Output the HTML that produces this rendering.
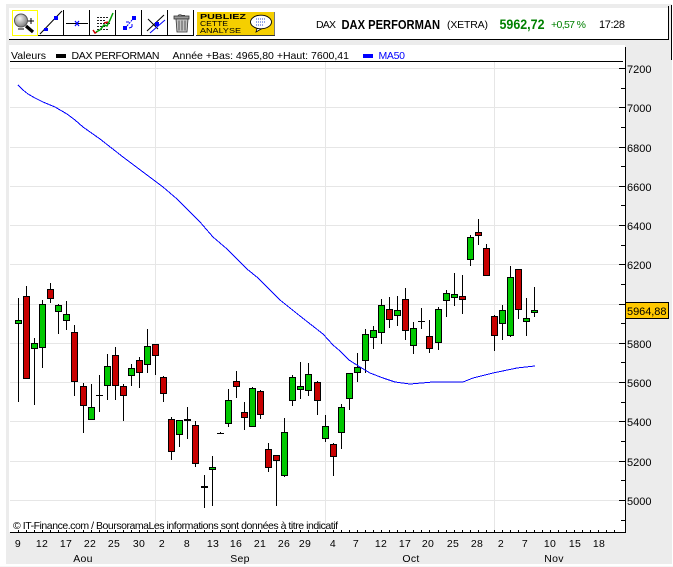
<!DOCTYPE html>
<html><head><meta charset="utf-8"><title>DAX PERFORMAN</title>
<style>
html,body{margin:0;padding:0;background:#fff;width:673px;height:567px;overflow:hidden}
svg{display:block}
text{font-family:"Liberation Sans",sans-serif;fill:#000}
.ax text{font-size:11px}
.bt text{font-size:10.5px;text-anchor:middle;letter-spacing:.3px}
.c{shape-rendering:crispEdges}
</style></head><body>
<svg width="673" height="567" viewBox="0 0 673 567" xmlns="http://www.w3.org/2000/svg">
<defs><radialGradient id="g" cx=".4" cy=".35" r=".7"><stop offset="0" stop-color="#f4f4f4"/><stop offset="1" stop-color="#777"/></radialGradient></defs>
<g class="c">
<rect x="6" y="4" width="666" height="560" fill="#ececec"/>
<rect x="0" y="566" width="673" height="1" fill="#f5f5f5"/>
<rect x="9" y="8" width="659" height="31" fill="#fff"/>
<rect x="9" y="39" width="660" height="1" fill="#000"/>
<rect x="668" y="6" width="1" height="34" fill="#000"/>
<rect x="671" y="5" width="1" height="55" fill="#000"/>
<rect x="9" y="45" width="616" height="487" fill="#fff"/>
<path d="M10 68.5H621M10 107.5H621M10 147.5H621M10 186.5H621M10 225.5H621M10 264.5H621M10 304.5H621M10 343.5H621M10 382.5H621M10 421.5H621M10 461.5H621M10 500.5H621M155.5 62V532M325.5 62V532M494.5 62V532" stroke="#e6e6e6" fill="none"/>
<rect x="10" y="61" width="613" height="1" fill="#000"/>
<rect x="625" y="47" width="1" height="486" fill="#000"/>
<rect x="10" y="532" width="616" height="1" fill="#000"/>
<path d="M619 68.5h6M621 88.5h4M619 107.5h6M621 127.5h4M619 147.5h6M621 166.5h4M619 186.5h6M621 205.5h4M619 225.5h6M621 245.5h4M619 264.5h6M621 284.5h4M619 304.5h6M621 323.5h4M619 343.5h6M621 362.5h4M619 382.5h6M621 402.5h4M619 421.5h6M621 441.5h4M619 461.5h6M621 480.5h4M619 500.5h6M621 520.5h4" stroke="#000" fill="none"/>
<path d="M18.5 530v2M26.5 530v2M34.5 530v2M42.5 530v2M50.5 530v2M58.5 530v2M66.5 530v2M74.5 530v2M83.5 530v2M91.5 530v2M99.5 530v2M107.5 530v2M115.5 530v2M123.5 530v2M131.5 530v2M139.5 530v2M147.5 530v2M155.5 530v2M163.5 530v2M171.5 530v2M179.5 530v2M187.5 530v2M195.5 530v2M204.5 530v2M212.5 530v2M220.5 530v2M228.5 530v2M236.5 530v2M244.5 530v2M252.5 530v2M260.5 530v2M268.5 530v2M276.5 530v2M284.5 530v2M292.5 530v2M300.5 530v2M308.5 530v2M317.5 530v2M325.5 530v2M333.5 530v2M341.5 530v2M349.5 530v2M357.5 530v2M365.5 530v2M373.5 530v2M381.5 530v2M389.5 530v2M397.5 530v2M405.5 530v2M413.5 530v2M421.5 530v2M429.5 530v2M438.5 530v2M446.5 530v2M454.5 530v2M462.5 530v2M470.5 530v2M478.5 530v2M486.5 530v2M494.5 530v2M502.5 530v2M510.5 530v2M518.5 530v2M526.5 530v2M534.5 530v2M542.5 530v2M550.5 530v2M558.5 530v2M566.5 530v2M574.5 530v2M582.5 530v2M590.5 530v2M598.5 530v2M606.5 530v2M614.5 530v2" stroke="#000" fill="none"/>
<!-- wicks -->
<path stroke="#000" fill="none" d="M18.5 298V402M26.5 286V379M34.5 338V405M42.5 300V368M50.5 283V303M58.5 304V334M66.5 301V330M74.5 325V396M83.5 383V433M91.5 384V420M99.5 375V412M107.5 354V400M115.5 347V400M123.5 384V421M131.5 364V386M139.5 357V388M147.5 329V373M155.5 344V375M163.5 376V402M171.5 417V460M179.5 420V447M187.5 407V439M195.5 421V467M204.5 475V508M212.5 456V506M220.5 432V434M228.5 389V427M236.5 371V398M244.5 402V430M252.5 387V427M260.5 390V419M268.5 443V472M276.5 455V506M284.5 418V477M292.5 375V406M300.5 362V399M308.5 363V396M317.5 381V415M325.5 415V442M333.5 443V476M341.5 404V449M349.5 373V410M357.5 353V382M365.5 329V373M373.5 326V349M381.5 299V344M389.5 297V328M397.5 296V326M405.5 288V340M413.5 322V354M421.5 308V329M429.5 320V353M438.5 307V350M446.5 290V317M454.5 273V306M462.5 275V314M470.5 235V266M478.5 219V245M486.5 244V276M494.5 315V351M502.5 305V340M510.5 266V337M518.5 269V319M526.5 298V336M534.5 287V317"/>
<!-- dojis -->
<path fill="#000" d="M96 395h7v1h-7zM184 419h7v2h-7zM201 486h7v2h-7zM217 433h7v1h-7zM418 321h7v1h-7z"/>
<!-- green bodies -->
<path fill="#00c800" stroke="#000" d="M15.5 320.5h6v3h-6zM31.5 343.5h6v5h-6zM39.5 304.5h6v43h-6zM55.5 305.5h6v6h-6zM63.5 314.5h6v6h-6zM88.5 407.5h6v12h-6zM104.5 366.5h6v19h-6zM128.5 368.5h6v7h-6zM144.5 346.5h6v18h-6zM176.5 420.5h6v14h-6zM209.5 467.5h6v2h-6zM225.5 400.5h6v23h-6zM249.5 388.5h6v38h-6zM281.5 432.5h6v43h-6zM289.5 377.5h6v23h-6zM297.5 386.5h6v3h-6zM305.5 374.5h6v16h-6zM322.5 426.5h6v12h-6zM338.5 407.5h6v25h-6zM346.5 373.5h6v25h-6zM354.5 367.5h6v5h-6zM362.5 334.5h6v26h-6zM370.5 330.5h6v7h-6zM378.5 305.5h6v27h-6zM394.5 310.5h6v5h-6zM410.5 328.5h6v17h-6zM435.5 309.5h6v33h-6zM443.5 293.5h6v7h-6zM451.5 294.5h6v3h-6zM467.5 237.5h6v22h-6zM499.5 310.5h6v13h-6zM507.5 277.5h6v58h-6zM523.5 318.5h6v3h-6zM531.5 310.5h6v2h-6z"/>
<!-- red bodies -->
<path fill="#c80000" stroke="#000" d="M23.5 296.5h6v82h-6zM47.5 289.5h6v9h-6zM71.5 332.5h6v49h-6zM80.5 386.5h6v19h-6zM112.5 355.5h6v30h-6zM120.5 386.5h6v9h-6zM136.5 360.5h6v12h-6zM152.5 344.5h6v11h-6zM160.5 377.5h6v16h-6zM168.5 419.5h6v32h-6zM192.5 425.5h6v38h-6zM233.5 381.5h6v5h-6zM241.5 412.5h6v5h-6zM257.5 391.5h6v23h-6zM265.5 449.5h6v18h-6zM273.5 455.5h6v5h-6zM314.5 382.5h6v18h-6zM330.5 444.5h6v12h-6zM386.5 309.5h6v10h-6zM402.5 299.5h6v31h-6zM426.5 336.5h6v12h-6zM459.5 296.5h6v3h-6zM475.5 232.5h6v3h-6zM483.5 248.5h6v27h-6zM491.5 316.5h6v19h-6zM515.5 269.5h6v40h-6z"/>
</g>
<!-- MA50 -->
<polyline class="c" fill="none" stroke="#0000ff" stroke-width="1" points="18,85 23,90 28,94 35,98 43,102 55,107 67,114 75,120 83,127 100,139 123,157 147,175 163,187 177,199 190,212 200,222 213,237 227,249 247,269 258,278 280,300 300,316 323,334 333,345 340,351 349,360 360,367 370,373 383,378 395,382 410,384 433,382 463,382 473,378 493,373 517,368 535,366"/>
<!-- toolbar -->
<g class="c">
<path d="M38 35.5H193M63.5 10V36M89.5 10V36M115.5 10V36M141.5 10V36M167.5 10V36M193.5 10V36" stroke="#000" fill="none"/>
<rect x="12.5" y="10.5" width="25" height="25" fill="none" stroke="#ffff00"/>
<rect x="197" y="12" width="77" height="23" fill="#f5cf00"/>
<rect x="274" y="12" width="1" height="24" fill="#777"/>
<rect x="196" y="35" width="79" height="1" fill="#333"/>
</g>
<!-- magnifier -->
<path d="M26 26L33 32" stroke="#000" stroke-width="3.2" fill="none"/>
<circle cx="21" cy="20.5" r="6.5" fill="url(#g)" stroke="#555"/>
<path d="M28 21h6M31 18v6M18 29h6" stroke="#000" fill="none" class="c"/>
<!-- btn2 -->
<path d="M40 34L62 11" stroke="#000" fill="none"/>
<path d="M44 28h4v3h-4zM54 16h4v4h-4z" fill="#0000ff"/>
<!-- btn3 -->
<path d="M66 23.5H88" stroke="#000" fill="none" class="c"/>
<path d="M75 21l4 5M79 21l-4 5" stroke="#0000ff" stroke-width="1.2" fill="none"/>
<!-- btn4 -->
<path d="M97 17.5h12M97 20.5h9M97 23.5h13M97 26.5h8M97 29.5h12" stroke="#222" stroke-dasharray="2 1" fill="none" class="c"/>
<path d="M100 30l4-5 3 1 3-6 3-7" stroke="#00a000" stroke-width="1.5" fill="none"/>
<path d="M93 30l2 3 2-1" stroke="#d00000" stroke-width="1.5" fill="none"/>
<path d="M96 32l4-2" stroke="#00a000" stroke-width="1.5" fill="none"/>
<path d="M104 23l4-1" stroke="#d00000" stroke-width="1.5" fill="none"/>
<!-- btn5 -->
<path d="M123 26h4v4h-4zM132 16h4v4h-4z" fill="#0000ff" class="c"/>
<path d="M127 26l5-6" stroke="#0000ff" stroke-dasharray="2 1" fill="none"/>
<path d="M126 22l3 0M129 28l3-1M132 24l0 3" stroke="#0000ff" fill="none"/>
<!-- btn6 -->
<path d="M147 31L164 15M148 19L158 29" stroke="#000" fill="none"/>
<path d="M150 33L165 20" stroke="#0000ff" fill="none"/>
<path d="M155 22h4v4h-4z" fill="#0000ff"/>
<!-- trash -->
<path d="M178 15.5q2-1.500 4 0h3" stroke="#444" fill="none"/>
<rect x="174" y="16" width="15" height="3" fill="#9a9a9a" stroke="#333" stroke-width=".8"/>
<path d="M176 19h12l-1 13h-10z" fill="#c4c4c4" stroke="#333" stroke-width=".8"/>
<path d="M179 20.500v10M182 20.500v10M185 20.500v10" stroke="#555" fill="none"/>
<!-- banner -->
<text x="200" y="19" font-size="7.500" font-weight="bold" textLength="46" lengthAdjust="spacingAndGlyphs">PUBLIEZ</text>
<text x="200" y="26" font-size="7.500" textLength="28" lengthAdjust="spacingAndGlyphs">CETTE</text>
<text x="200" y="33" font-size="7.500" textLength="41" lengthAdjust="spacingAndGlyphs">ANALYSE</text>
<path d="M257 28.500L256 32L262 28.500Z" fill="#fff" stroke="#000" stroke-width=".8"/>
<ellipse cx="261" cy="22" rx="10.500" ry="6.800" fill="#fff" stroke="#000" stroke-width=".9"/>
<path d="M256 19h10M256 22h10M256 25h8" stroke="#2a4fd0" stroke-dasharray="1 1" fill="none" class="c"/>
<!-- header -->
<text x="316" y="28" font-size="10.500" textLength="20" lengthAdjust="spacing">DAX</text>
<text x="341.500" y="29" font-size="12.500" font-weight="bold" textLength="98.500" lengthAdjust="spacingAndGlyphs">DAX PERFORMAN</text>
<text x="447" y="28" font-size="10.500" textLength="41" lengthAdjust="spacing">(XETRA)</text>
<text x="499.500" y="29" font-size="13.500" font-weight="bold" style="fill:#008000" textLength="45" lengthAdjust="spacingAndGlyphs">5962,72</text>
<text x="551" y="28" font-size="10.500" style="fill:#008000" textLength="35" lengthAdjust="spacing">+0,57 %</text>
<text x="599" y="28" font-size="11" textLength="26" lengthAdjust="spacing">17:28</text>
<!-- legend -->
<text x="11" y="59" font-size="10.500" textLength="35" lengthAdjust="spacing">Valeurs</text>
<rect x="56" y="54" width="10" height="4" fill="#000" class="c"/>
<text x="71.500" y="59" font-size="10.500" textLength="88" lengthAdjust="spacing">DAX PERFORMAN</text>
<text x="172.500" y="59" font-size="10.500" textLength="176.500" lengthAdjust="spacing">Année +Bas: 4965,80 +Haut: 7600,41</text>
<rect x="363" y="54" width="10" height="4" fill="#0000ff" class="c"/>
<text x="378.500" y="59" font-size="10.500" style="fill:#0000ff" textLength="26.500" lengthAdjust="spacing">MA50</text>
<!-- y labels -->
<g class="ax">
<text x="627" y="73">7200</text><text x="627" y="112">7000</text><text x="627" y="152">6800</text><text x="627" y="191">6600</text><text x="627" y="230">6400</text><text x="627" y="269">6200</text><text x="627" y="348">5800</text><text x="627" y="387">5600</text><text x="627" y="426">5400</text><text x="627" y="466">5200</text><text x="627" y="505">5000</text>
</g>
<rect x="625.500" y="302.500" width="43" height="16" fill="#ffc800" stroke="#000" class="c"/>
<text x="627" y="315" font-size="11" textLength="39.500" lengthAdjust="spacing">5964,88</text>
<!-- copyright -->
<text x="13" y="529" font-size="10.500" textLength="325" lengthAdjust="spacing">© IT-Finance.com / BoursoramaLes informations sont données à titre indicatif</text>
<!-- x labels -->
<g class="bt">
<text x="18" y="547">9</text><text x="42" y="547">12</text><text x="66" y="547">17</text><text x="90" y="547">22</text><text x="114" y="547">25</text><text x="139" y="547">30</text><text x="162" y="547">2</text><text x="187" y="547">8</text><text x="213" y="547">13</text><text x="236" y="547">16</text><text x="260" y="547">21</text><text x="284" y="547">26</text><text x="305" y="547">29</text><text x="333" y="547">4</text><text x="356" y="547">7</text><text x="381" y="547">12</text><text x="405" y="547">17</text><text x="428" y="547">20</text><text x="453" y="547">25</text><text x="477" y="547">28</text><text x="501" y="547">2</text><text x="525" y="547">7</text><text x="550" y="547">10</text><text x="575" y="547">15</text><text x="599" y="547">18</text>
<text x="83" y="562">Aou</text><text x="240" y="562">Sep</text><text x="411" y="562">Oct</text><text x="554" y="562">Nov</text>
</g>
</svg>
</body></html>
